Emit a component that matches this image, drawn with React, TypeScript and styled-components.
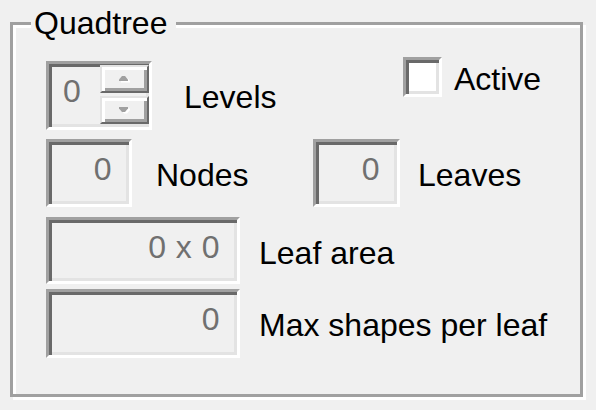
import React from 'react';
import styled, { createGlobalStyle } from 'styled-components';

const Global = createGlobalStyle`
  html, body { margin: 0; padding: 0; background: #f0f0f0; }
  body {
    font-family: "Liberation Sans", Arial, sans-serif;
    font-size: 32px;
    color: #000;
    width: 596px;
    height: 410px;
    overflow: hidden;
  }
`;

const Page = styled.div`
  padding: 6px 0 0 10px;
`;

const GroupBox = styled.fieldset`
  box-sizing: border-box;
  width: 573px;
  height: 391px;
  margin: 0;
  padding: 20px 0 0 18px;
  min-width: 0;
  border: 3px solid #a0a0a0;
  box-shadow: inset 3px 3px 0 #fff, 3px 3px 0 #fff;
`;

const Legend = styled.legend`
  padding: 0 9px 0 3px;
  line-height: 35px;
  font-size: 32px;
  background: #f0f0f0;
`;

const Content = styled.div`
  margin-left: 15px;
  display: flex;
  flex-direction: column;
`;

const Row = styled.div<{ $mt: number }>`
  display: flex;
  align-items: flex-start;
  margin-top: ${(p) => p.$mt}px;
`;

const Cell = styled.div<{ $w?: number }>`
  display: flex;
  align-items: flex-start;
  ${(p) => (p.$w ? `width: ${p.$w}px; flex: none;` : '')}
`;

const Sunken = styled.div<{ $w: number; $h: number }>`
  box-sizing: border-box;
  width: ${(p) => p.$w}px;
  height: ${(p) => p.$h}px;
  border: 3px solid;
  border-color: #a0a0a0 #fff #fff #a0a0a0;
  box-shadow: inset 3px 3px 0 #696969, inset -3px -3px 0 #e3e3e3;
  background: #f0f0f0;
`;

const ReadOnlyField = styled(Sunken)`
  padding: 9px 17px 0 6px;
  text-align: right;
  line-height: 36px;
  color: #707070;
  white-space: pre;
  letter-spacing: 0.5px;
`;

const SpinBox = styled(Sunken)`
  display: flex;
  align-items: stretch;
  padding: 1px 0 3px 0;
`;

const SpinText = styled.div`
  flex: 1;
  padding: 8px 0 0 14px;
  line-height: 36px;
  color: #707070;
`;

const SpinButtons = styled.div`
  width: 49px;
  display: flex;
  flex-direction: column;
  gap: 3px;
`;

const SpinButton = styled.div`
  box-sizing: border-box;
  flex: 1;
  display: flex;
  align-items: center;
  justify-content: center;
  border: 2px solid;
  border-color: #e3e3e3 #696969 #696969 #e3e3e3;
  box-shadow: inset 3px 3px 0 #fff, inset -3px -3px 0 #a0a0a0;
  background: #f0f0f0;
`;

const Label = styled.span<{ $ml: number; $pt?: number }>`
  margin-left: ${(p) => p.$ml}px;
  padding-top: ${(p) => (p.$pt ?? 18)}px;
  line-height: 36px;
  white-space: nowrap;
`;

const CheckWrap = styled.div`
  display: flex;
  align-items: flex-start;
  margin-left: 90px;
  margin-top: -4px;
`;

const CheckBox = styled.div`
  box-sizing: border-box;
  width: 39px;
  height: 40px;
  border: 3px solid;
  border-color: #a0a0a0 #fff #fff #a0a0a0;
  box-shadow: inset 3px 3px 0 #696969, inset -3px -3px 0 #e3e3e3;
  background: #fff;
`;

const Arrow = ({ dir }: { dir: 'up' | 'down' }) => (
  <svg width="14" height="8" viewBox="0 0 14 8" aria-hidden="true">
    {dir === 'up' ? (
      <>
        <polygon points="4,1 7,1 10,4.5 10,6 1,6 1,4.5" fill="#fff" transform="translate(2,1.5)" />
        <polygon points="4,1 7,1 10,4.5 10,6 1,6 1,4.5" fill="#a0a0a0" />
      </>
    ) : (
      <>
        <polygon points="1,1 10,1 10,2.5 7,6 4,6 1,2.5" fill="#fff" transform="translate(2,1.5)" />
        <polygon points="1,1 10,1 10,2.5 7,6 4,6 1,2.5" fill="#a0a0a0" />
      </>
    )}
  </svg>
);

export default function App() {
  return (
    <>
      <Global />
      <Page>
        <GroupBox>
          <Legend>Quadtree</Legend>
          <Content>
            <Row $mt={0}>
              <Cell $w={267}>
                <SpinBox $w={106} $h={69}>
                  <SpinText>0</SpinText>
                  <SpinButtons>
                    <SpinButton>
                      <Arrow dir="up" />
                    </SpinButton>
                    <SpinButton>
                      <Arrow dir="down" />
                    </SpinButton>
                  </SpinButtons>
                </SpinBox>
                <Label $ml={32} $pt={18}>Levels</Label>
              </Cell>
              <CheckWrap>
                <CheckBox />
                <Label $ml={12} $pt={4}>Active</Label>
              </CheckWrap>
            </Row>
            <Row $mt={9}>
              <Cell $w={267}>
                <ReadOnlyField $w={86} $h={68}>0</ReadOnlyField>
                <Label $ml={24}>Nodes</Label>
              </Cell>
              <Cell>
                <ReadOnlyField $w={87} $h={68}>0</ReadOnlyField>
                <Label $ml={18}>Leaves</Label>
              </Cell>
            </Row>
            <Row $mt={10}>
              <Cell>
                <ReadOnlyField $w={194} $h={67}>0 x 0</ReadOnlyField>
                <Label $ml={19}>Leaf area</Label>
              </Cell>
            </Row>
            <Row $mt={5}>
              <Cell>
                <ReadOnlyField $w={194} $h={69}>0</ReadOnlyField>
                <Label $ml={19}>Max shapes per leaf</Label>
              </Cell>
            </Row>
          </Content>
        </GroupBox>
      </Page>
    </>
  );
}
